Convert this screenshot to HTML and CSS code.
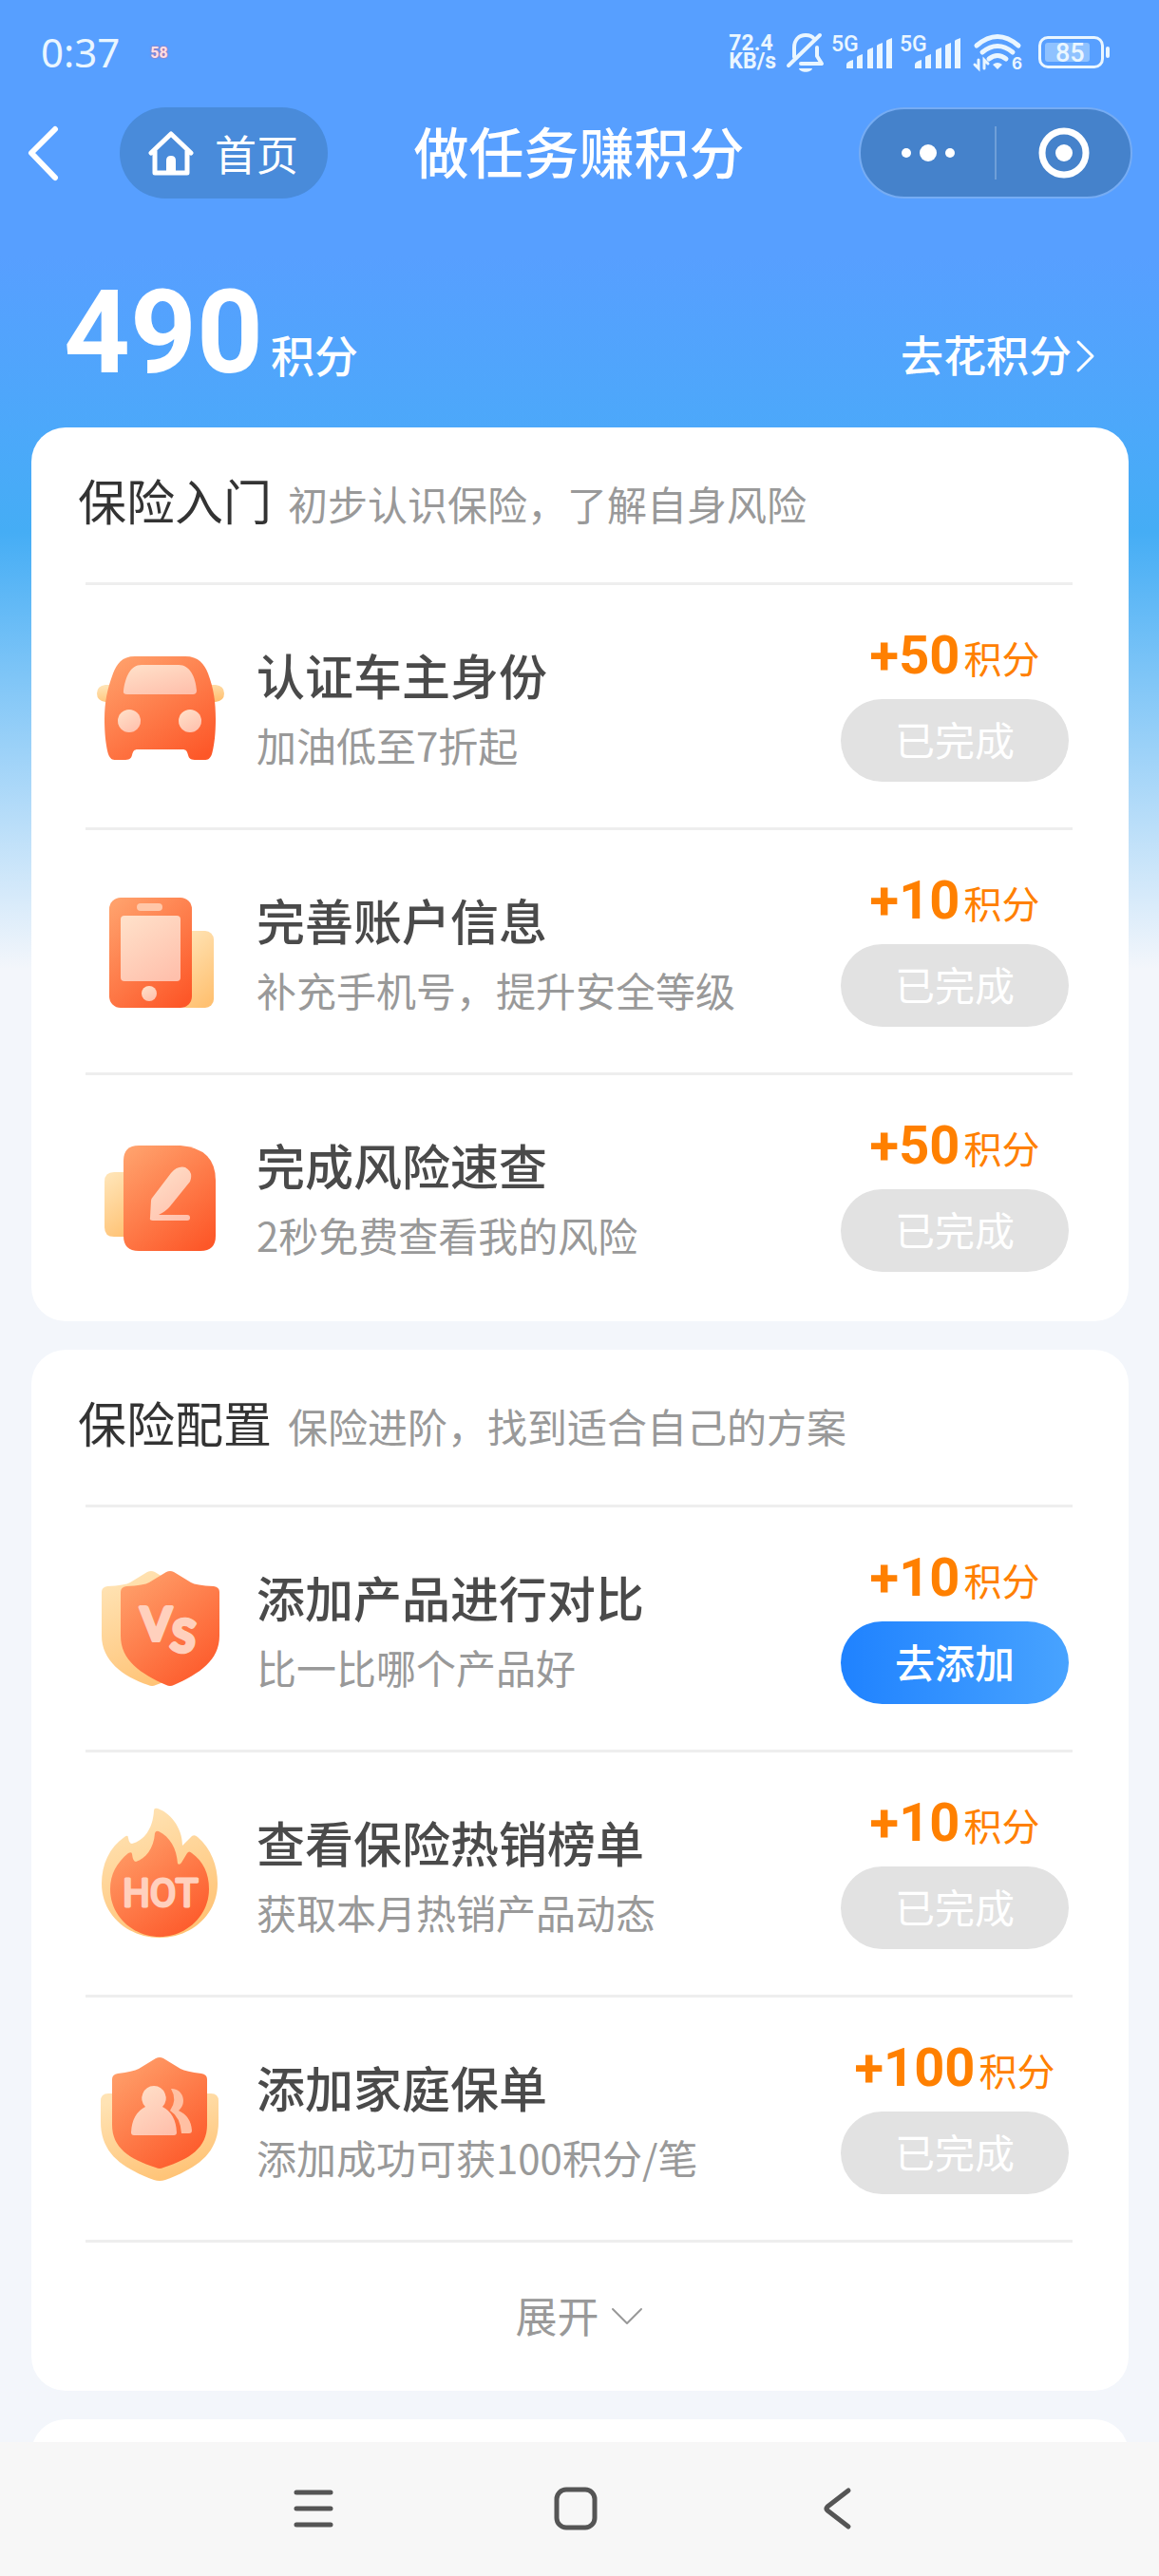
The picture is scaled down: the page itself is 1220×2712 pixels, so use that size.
FILE: index.html
```html
<!DOCTYPE html>
<html lang="zh-CN">
<head>
<meta charset="utf-8">
<meta name="viewport" content="width=device-width">
<title>做任务赚积分</title>
<link rel="stylesheet" href="styles.css">
</head>
<body>
<svg width="0" height="0" class="defs" aria-hidden="true">
  <defs>
    <linearGradient id="hot" x1="0.15" y1="0" x2="0.85" y2="1"><stop offset="0" stop-color="#ffa06b"/><stop offset="1" stop-color="#fd5728"/></linearGradient>
    <linearGradient id="warm" x1="0.3" y1="0" x2="0.7" y2="1"><stop offset="0" stop-color="#ffe3b4"/><stop offset="1" stop-color="#ffc172"/></linearGradient>
    <linearGradient id="pale" x1="0.2" y1="0" x2="0.8" y2="1"><stop offset="0" stop-color="#ffdfc8"/><stop offset="1" stop-color="#ffc0ac"/></linearGradient>
  </defs>
</svg>
<div class="app">
  <main class="page">
    <div class="status">
      <div class="status-left"><span class="clock">0:37</span><span class="badge58">58</span></div>
      <div class="status-right">
        <span class="speed"><span>72.4</span><span>KB/s</span></span>
        <svg width="42" height="42" viewBox="0 0 42 42" fill="none" stroke="#eaf6ff" stroke-width="4" stroke-linecap="round" stroke-linejoin="round"><path d="M36 3 3 35M9 26V16C9 8 14 3 21 3c4 0 7 1 9 4M33 16v9l5 8H16"/><path d="M14 38h14c-1 5-13 5-14 0z" fill="#eaf6ff" stroke="none"/></svg>
        <span class="cell"><b>5G</b><svg width="50" height="32" viewBox="0 0 50 32" fill="#eaf6ff"><path d="M0 32v-4q0-3 7-5v9zM11 32V20q0-1 6-3v15zM22 32V13q0-1 6-3v22zM32 32V8q0-1 6-3v27zM42 32V3q0-1 6-3v32z"/></svg></span>
        <span class="cell"><b>5G</b><svg width="50" height="32" viewBox="0 0 50 32" fill="#eaf6ff"><path d="M0 32v-4q0-3 7-5v9zM11 32V20q0-1 6-3v15zM22 32V13q0-1 6-3v22zM32 32V8q0-1 6-3v27zM42 32V3q0-1 6-3v32z"/></svg></span>
        <svg class="wifi" width="52" height="40" viewBox="0 0 52 40" fill="none" stroke="#eaf6ff" stroke-width="5" stroke-linecap="round"><path d="M3 13Q25-6 47 13M9 20q16-13 32 0M16 27q9-7 18 0"/><path d="M20 33q5-4 10 0l-5 5z" fill="#eaf6ff" stroke="none"/><path d="M5 28v9l-4-4M11 37v-9l4 4" stroke-width="3"/><text x="40" y="38" font-family="Inter,sans-serif" font-weight="700" font-size="17" fill="#eaf6ff" stroke="none">6</text></svg>
        <span class="battery"><span class="level">85</span></span>
      </div>
    </div>

    <header class="nav">
      <div class="nav-left">
        <a class="back" href="#" aria-label="返回"><svg width="36" height="60" viewBox="0 0 36 60" fill="none" stroke="#fff" stroke-width="6" stroke-linecap="round" stroke-linejoin="round"><path d="M31 5 6 30l25 26"/></svg></a>
        <a class="home" href="#"><svg width="48" height="48" viewBox="0 0 48 48" fill="none" stroke="#fff" stroke-width="5" stroke-linecap="round" stroke-linejoin="round"><path d="M3 24 24 4l21 20M7 22v23h34V22"/><path d="M19 45V32q0-5 5-5t5 5v13z" fill="#fff" stroke="none"/></svg>首页</a>
      </div>
      <h1>做任务赚积分</h1>
      <div class="capsule">
        <button aria-label="更多"><svg width="58" height="20" viewBox="0 0 58 20" fill="#fff"><circle cx="6" cy="10" r="5"/><circle cx="29" cy="10" r="9"/><circle cx="52" cy="10" r="5"/></svg></button>
        <button aria-label="关闭"><svg width="54" height="54" viewBox="0 0 54 54"><circle cx="27" cy="27" r="23" fill="none" stroke="#fff" stroke-width="7"/><circle cx="27" cy="27" r="9" fill="#fff"/></svg></button>
      </div>
    </header>

    <section class="points">
      <p class="total"><span class="num">490</span>积分</p>
      <a class="spend" href="#">去花积分<svg width="22" height="36" viewBox="0 0 22 36" fill="none" stroke="#fff" stroke-width="3" stroke-linecap="round" stroke-linejoin="round"><path d="M3 3 18 18 3 33"/></svg></a>
    </section>

    <section class="card">
      <div class="card-head"><h2>保险入门</h2><p>初步认识保险，了解自身风险</p></div>
      <ul class="tasks">
        <li>
          <svg class="icon" viewBox="0 0 144 144"><path d="M22 49H14q-9 1-9 9t9 9h8zM122 49h8q9 1 9 9t-9 9h-8z" fill="url(#warm)"/><path d="M45 19h53c14 0 20 8 24 18 6 16 8 30 8 48 0 18-2 30-4 37-2 5-4 6-8 6h-8c-6 0-8-1-9-5-1-4-2-6-6-6H48c-4 0-5 2-6 6s-3 5-9 5h-8c-4 0-6-1-8-6-2-7-4-19-4-37 0-18 3-32 9-48 4-10 9-18 23-18z" fill="url(#hot)"/><path d="M52 28h39c12 0 18 13 19 27q0 4-4 4H37q-5 0-4-4c2-14 7-27 19-27z" fill="url(#pale)"/><circle cx="39" cy="87" r="12" fill="url(#pale)"/><circle cx="103" cy="87" r="12" fill="url(#pale)"/></svg>
          <div class="info"><h3>认证车主身份</h3><p>加油低至7折起</p></div>
          <div class="reward"><p><b>+50</b>积分</p><button class="done" disabled>已完成</button></div>
        </li>
        <li>
          <svg class="icon" viewBox="0 0 144 144"><rect x="90" y="50" width="38" height="81" rx="9" fill="url(#warm)"/><rect x="18" y="15" width="87" height="116" rx="12" fill="url(#hot)"/><rect x="47" y="21" width="27" height="8" rx="4" fill="#ffc7a8"/><rect x="30" y="34" width="63" height="69" rx="4" fill="url(#pale)"/><circle cx="60" cy="116" r="8" fill="url(#pale)"/></svg>
          <div class="info"><h3>完善账户信息</h3><p>补充手机号，提升安全等级</p></div>
          <div class="reward"><p><b>+10</b>积分</p><button class="done" disabled>已完成</button></div>
        </li>
        <li>
          <svg class="icon" viewBox="0 0 144 144"><path d="M50 46H23q-10 0-10 10v48q0 10 10 10h27z" fill="url(#warm)"/><path d="M49 18h44q37 3 37 37v58q0 16-16 16H49q-16 0-16-16V34q0-16 16-16z" fill="url(#hot)"/><path d="M64 97q-4 0-3-3l1-18q0-2 2-4l19-25q7-8 15-6 9 5 5 15L82 82q-4 5-12 9h30q3 0 3 3t-3 3z" fill="url(#pale)"/></svg>
          <div class="info"><h3>完成风险速查</h3><p>2秒免费查看我的风险</p></div>
          <div class="reward"><p><b>+50</b>积分</p><button class="done" disabled>已完成</button></div>
        </li>
      </ul>
    </section>

    <section class="card">
      <div class="card-head"><h2>保险配置</h2><p>保险进阶，找到适合自己的方案</p></div>
      <ul class="tasks">
        <li>
          <svg class="icon" viewBox="0 0 144 144"><path d="M58 12q4-2 8 0l18 11q5 3 24 4 6 1 6 6v46c0 26-21 43-47 52q-4 2-8 0C32 122 10 105 10 79V33q0-5 6-6 19-1 24-4z" fill="url(#warm)"/><path d="M78 12q4-2 8 0l18 11q5 3 24 4 6 1 6 6v46c0 26-21 40-48 52q-4 2-8 0C51 119 30 105 30 79V33q0-5 6-6 19-1 24-4z" fill="url(#hot)"/><g font-family="Lato,sans-serif" font-weight="700" fill="#ffd0bd" stroke="#ffd0bd" stroke-width="4" stroke-linejoin="round" font-size="47"><text x="51" y="84">V</text><text x="83" y="96" transform="rotate(6 97 80)">S</text></g></svg>
          <div class="info"><h3>添加产品进行对比</h3><p>比一比哪个产品好</p></div>
          <div class="reward"><p><b>+10</b>积分</p><button class="go">去添加</button></div>
        </li>
        <li>
          <svg class="icon" viewBox="0 0 144 144"><path d="M65 5q0-3 4-2c12 4 26 19 26 39l10-10q3-2 6 1c14 12 21 30 21 49 0 33-28 57-61 57S10 115 10 82c0-20 8-38 24-49q4-3 4 1 1 6 4 6c12-3 22-15 23-35z" fill="url(#warm)"/><path d="M66 29q1-3 4-2c12 6 19 18 20 34q2 2 4-1l6-10q2-3 5 0c12 9 18 21 18 38 0 28-24 50-52 50S19 116 19 88c0-16 7-28 19-38q4-2 4 1 1 8 4 8c10-3 19-14 20-30z" fill="url(#hot)"/><text x="72" y="106" text-anchor="middle" font-family="Roboto,sans-serif" font-weight="400" font-size="40" fill="#ffd0bd" stroke="#ffd0bd" stroke-width="3" stroke-linejoin="round">HOT</text></svg>
          <div class="info"><h3>查看保险热销榜单</h3><p>获取本月热销产品动态</p></div>
          <div class="reward"><p><b>+10</b>积分</p><button class="done" disabled>已完成</button></div>
        </li>
        <li>
          <svg class="icon" viewBox="0 0 144 144"><path d="M17 45h108q8 0 8 8v22c0 34-24 49-56 61q-6 2-12 0C33 124 9 109 9 75V53q0-8 8-8z" fill="url(#warm)"/><path d="M67 8q4-2 8 0l18 11q6 3 22 5 6 1 6 6v48c0 24-18 36-46 45q-4 2-8 0C39 114 21 102 21 78V30q0-5 6-6 16-2 22-5z" fill="url(#hot)"/><path d="M83 40c12-1 18 15 8 23q13 6 14 21 0 3-3 3h-8q-1-17-12-24 8-11 1-23z" fill="#ffc0a3"/><path d="M65 37a13 13 0 0 1 9 22q14 7 15 27 0 3-3 3H44q-3 0-3-3 1-20 15-27a13 13 0 0 1 9-22z" fill="url(#pale)"/></svg>
          <div class="info"><h3>添加家庭保单</h3><p>添加成功可获100积分/笔</p></div>
          <div class="reward"><p><b>+100</b>积分</p><button class="done" disabled>已完成</button></div>
        </li>
      </ul>
      <button class="expand">展开<svg width="34" height="20" viewBox="0 0 34 20" fill="none" stroke="#999" stroke-width="2" stroke-linecap="round" stroke-linejoin="round"><path d="M2 2 17 17 32 2"/></svg></button>
    </section>

    <section class="card next"></section>
  </main>

  <nav class="system">
    <button aria-label="最近任务"><svg width="48" height="48" viewBox="0 0 48 48" stroke="#555" stroke-width="5" stroke-linecap="round"><path d="M6 7h36M6 24h36M6 41h36"/></svg></button>
    <button aria-label="主屏幕"><svg width="48" height="48" viewBox="0 0 48 48" fill="none" stroke="#555" stroke-width="5"><rect x="4" y="4" width="40" height="40" rx="10"/></svg></button>
    <button aria-label="返回"><svg width="48" height="48" viewBox="0 0 48 48" fill="none" stroke="#555" stroke-width="5" stroke-linecap="round" stroke-linejoin="round"><path d="M35 5 13 22q-2 2 0 4l22 17"/></svg></button>
  </nav>
</div>
</body>
</html>
```
FILE: styles.css
```css
* { box-sizing: border-box; margin: 0; padding: 0; }

body {
  font-family: "Noto Sans CJK SC", sans-serif;
  color: #333;
  background: #f3f6fb;
}

svg { display: block; flex: none; }
.defs { position: absolute; }
a { color: inherit; text-decoration: none; }
button { border: 0; background: none; font: inherit; color: inherit; }
ul { list-style: none; }

.app {
  display: flex;
  flex-direction: column;
  height: 100vh;
}

.page {
  flex: 1;
  min-height: 0;
  overflow: hidden;
  padding: 0 32px 0 33px;
  background: linear-gradient(#579fff 0, #579fff 270px, #4ca8fa 450px, #45adf5 560px, #f3f6fb 1020px);
}

/* phone status bar */
.status {
  display: flex;
  justify-content: space-between;
  align-items: center;
  height: 113px;
  padding: 0 26px 3px 10px;
  color: #eaf6ff;
  font-family: "Noto Sans", sans-serif;
}
.status-left, .status-right { display: flex; align-items: center; }
.status-left { gap: 32px; }
.clock { font-size: 42px; line-height: 48px; }
.badge58 {
  font-family: Roboto, sans-serif;
  font-size: 16px;
  font-weight: 700;
  color: #ffe0e6;
  text-shadow: 0 0 2px #f0506a;
}
.status-right { gap: 6px; }
.speed {
  display: grid;
  margin-right: 4px;
  font-family: Roboto, sans-serif;
  font-size: 23px;
  line-height: 19px;
  font-weight: 700;
}
.cell { display: flex; width: 66px; height: 34px; position: relative; }
.cell b { font-family: Roboto, sans-serif; font-size: 23px; line-height: 18px; font-weight: 500; }
.cell svg { position: absolute; right: 0; bottom: 0; }
.wifi { margin-left: 6px; overflow: visible; }
.battery {
  position: relative;
  width: 69px;
  height: 34px;
  margin-left: 10px;
  padding: 4px;
  border: 3px solid #eaf6ff;
  border-radius: 10px;
}
.battery::after {
  content: "";
  position: absolute;
  right: -9px;
  top: 8px;
  width: 4px;
  height: 12px;
  border-radius: 2px;
  background: #eaf6ff;
}
.level {
  display: block;
  width: 47px;
  height: 20px;
  padding-left: 11px;
  border-radius: 3px;
  background: #8fc2ff;
  font-family: Roboto, sans-serif;
  font-size: 27px;
  line-height: 22px;
  font-weight: 500;
}

/* title bar */
.nav {
  display: grid;
  grid-template-columns: 1fr auto 1fr;
  align-items: center;
  height: 96px;
  margin: 0 -4px 0 -6px;
  color: #fff;
}
.nav-left { display: flex; align-items: center; gap: 63px; }
.home {
  display: flex;
  align-items: center;
  gap: 22px;
  width: 219px;
  height: 96px;
  padding-left: 30px;
  border-radius: 48px;
  background: #498bda;
  font-size: 44px;
  line-height: 64px;
}
.nav h1 { padding-bottom: 6px; font-size: 58px; line-height: 84px; font-weight: 500; }
.capsule {
  justify-self: end;
  display: flex;
  align-items: center;
  width: 288px;
  height: 96px;
  border: 2px solid #76acf3;
  border-radius: 48px;
  background: #4582cb;
}
.capsule button { flex: 1; display: grid; place-items: center; height: 56px; }
.capsule button + button { border-left: 2px solid #6f9fd8; }

/* points summary */
.points {
  display: flex;
  justify-content: space-between;
  align-items: baseline;
  height: 241px;
  padding: 67px 34px 0;
  color: #fff;
  font-weight: 500;
}
.total { font-size: 46px; line-height: 150px; }
.num {
  margin-right: 8px;
  font-family: Roboto, sans-serif;
  font-size: 122px;
  font-weight: 700;
}
.spend { display: flex; align-items: center; gap: 4px; font-size: 45px; line-height: 64px; }
.spend svg { margin-top: 4px; }

/* cards */
.card {
  margin-bottom: 30px;
  padding: 0 59px 4px 57px;
  border-radius: 36px;
  background: #fff;
}
.card-head {
  display: flex;
  align-items: baseline;
  gap: 17px;
  height: 163px;
  padding-top: 38px;
  margin-left: -8px;
}
.card-head h2 { font-size: 51px; line-height: 76px; font-weight: 400; }
.card-head p { font-size: 42px; line-height: 76px; color: #999; }

.tasks li {
  display: flex;
  align-items: center;
  height: 258px;
  padding: 0 4px 0 7px;
  border-top: 3px solid #eee;
}
.icon { width: 144px; height: 144px; margin-right: 29px; }
.info { flex: 1; }
.info h3 { font-size: 51px; line-height: 80px; font-weight: 500; color: #4a4a4a; }
.info p { font-size: 42px; line-height: 68px; color: #999; }
.reward { width: 240px; text-align: center; }
.reward p { margin-bottom: 18px; font-size: 40px; line-height: 52px; color: #ff8000; }
.reward b { margin-right: 4px; font-family: Roboto, sans-serif; font-size: 56px; line-height: 52px; }
.reward button { width: 240px; height: 87px; padding-bottom: 4px; border-radius: 44px; font-size: 42px; line-height: 60px; color: #fff; }
.done { background: #e2e2e2; }
.go { background: linear-gradient(90deg, #1f82ff, #48a3ff); font-weight: 500; }

.expand {
  display: flex;
  justify-content: center;
  align-items: center;
  gap: 12px;
  width: 100%;
  height: 155px;
  border-top: 3px solid #eee;
  font-size: 44px;
  color: #999;
}
.expand svg { margin-top: 4px; }
.next { height: 500px; }

/* phone navigation bar */
.system {
  display: grid;
  grid-template-columns: repeat(3, 1fr);
  flex: none;
  height: 141px;
  padding: 0 200px 2px 192px;
  background: #f7f7f7;
}
.system button { display: grid; place-items: center; }
```
